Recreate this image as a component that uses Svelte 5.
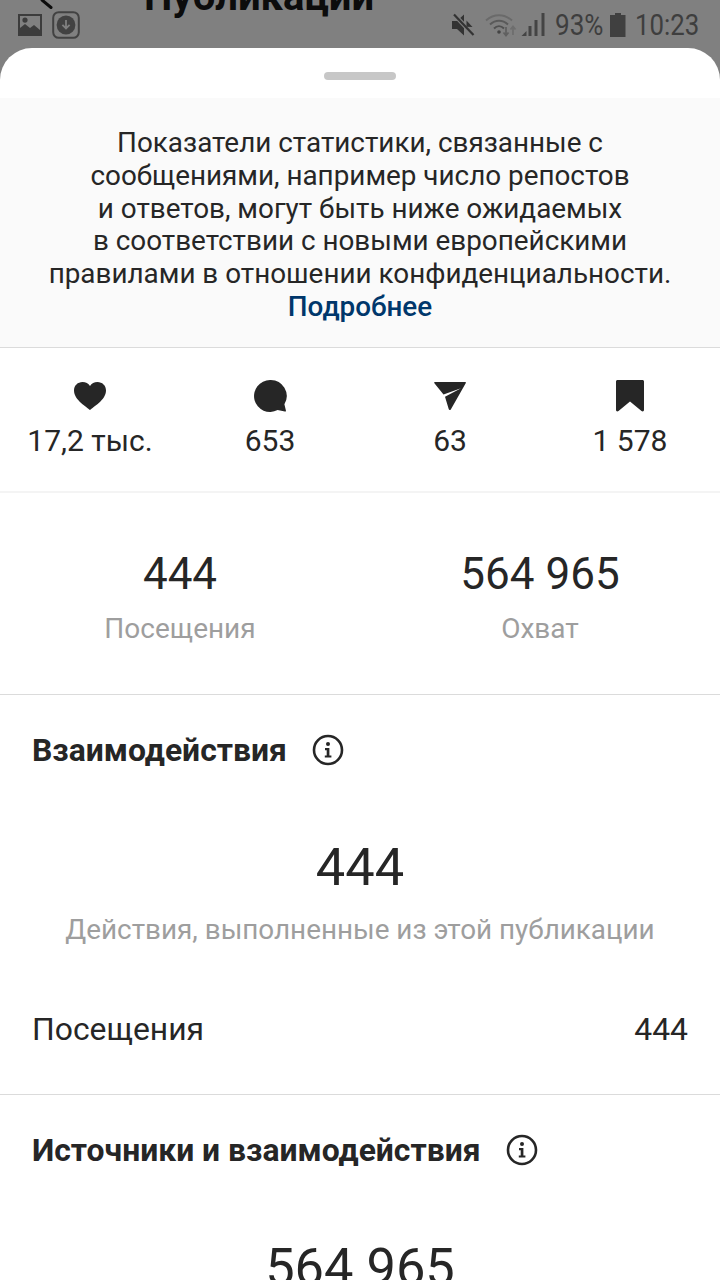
<script>
	const notice = [
		'Показатели статистики, связанные с',
		'сообщениями, например число репостов',
		'и ответов, могут быть ниже ожидаемых',
		'в соответствии с новыми европейскими',
		'правилами в отношении конфиденциальности.'
	];
	const counts = [
		{ icon: 'heart', value: '17,2 тыс.' },
		{ icon: 'comment', value: '653' },
		{ icon: 'send', value: '63' },
		{ icon: 'save', value: '1 578' }
	];
</script>

{#snippet info()}
	<svg class="info" viewBox="0 0 32 32" aria-hidden="true">
		<circle cx="16" cy="16" r="14" fill="none" stroke="#262626" stroke-width="2.6" />
		<circle cx="16" cy="10" r="2" fill="#262626" />
		<path d="M13 14h4.400v7.400h2v2.200h-6.600v-2.200h1.900v-5.200H13z" fill="#262626" />
	</svg>
{/snippet}

<div class="screen">
	<div class="statusbar">
		<div class="title">Публикации</div>
		<svg class="back" viewBox="0 0 24 12" aria-hidden="true">
			<path d="M2 0L11 7.500" fill="none" stroke="#0c0c0c" stroke-width="3" stroke-linecap="round" />
		</svg>
		<div class="left-icons">
			<svg class="pic" viewBox="0 0 24 22" aria-hidden="true">
				<path fill-rule="evenodd" d="M0 0h24v22H0zM2 2v12l5-4 5 4 4-3 6 5V2zM7 3.500a2.600 2.600 0 1 1 0 5.200 2.600 2.600 0 0 1 0-5.200z" fill="#3c3c3c" />
			</svg>
			<svg class="dl" viewBox="0 0 28 28" aria-hidden="true">
				<rect x="1.200" y="1.200" width="25.600" height="25.600" rx="5.500" fill="none" stroke="#424242" stroke-width="2" />
				<circle cx="14" cy="14" r="9.400" fill="#424242" />
				<path d="M14 9v8.400M10.400 13.800L14 17.400l3.600-3.600" fill="none" stroke="#808080" stroke-width="1.800" />
			</svg>
		</div>
		<div class="right-icons">
			<svg class="mute" viewBox="0 0 24 24" aria-hidden="true">
				<path d="M1 8h5l7-6.500v21L6 16H1z" fill="#333" />
				<path d="M3 1.500L23 22.500" stroke="#808080" stroke-width="4.400" />
				<path d="M3 1.500L22.500 22" stroke="#333" stroke-width="2.200" />
				<path d="M15.500 7.600l6 6.400-6-.2z" fill="#333" />
			</svg>
			<svg class="wifi" viewBox="0 0 32 24" aria-hidden="true">
				<path d="M1 7.500C9 0.500 19 0.500 27 7.500" fill="none" stroke="#6a6a6a" stroke-width="2" />
				<path d="M5 11.500C10.500 6.500 17.500 6.500 23 11.500" fill="none" stroke="#5a5a5a" stroke-width="2" />
				<path d="M9 15.500C12 12.500 16 12.500 19 15.500" fill="none" stroke="#505050" stroke-width="2" />
				<circle cx="14" cy="19" r="1.800" fill="#444" />
				<path d="M21 14v8M18.500 19.500l2.500 3 2.500-3" fill="none" stroke="#606060" stroke-width="1.800" />
				<path d="M28 22v-8M25.500 16.500l2.500-3 2.500 3" fill="none" stroke="#6e6e6e" stroke-width="1.800" />
			</svg>
			<svg class="signal" viewBox="0 0 24 24" aria-hidden="true">
				<path d="M0 23l5-5v5z" fill="#444" />
				<rect x="7" y="13" width="3" height="10" fill="#444" />
				<rect x="13" y="7" width="3" height="16" fill="#444" />
				<rect x="20" y="0" width="3" height="23" fill="#444" />
			</svg>
			<span class="pct">93%</span>
			<svg class="battery" viewBox="0 0 16 24" aria-hidden="true">
				<path d="M5 0h6v2h4.500v22H0V2h5z" fill="#404040" />
			</svg>
			<span class="clock">10:23</span>
		</div>
	</div>

	<div class="sheet">
		<div class="handle-row"><div class="handle"></div></div>

		<section class="notice">
			{#each notice as line}
				<div>{line}</div>
			{/each}
			<div class="more">Подробнее</div>
		</section>

		<section class="counts">
			{#each counts as c}
				<div class="count">
					<svg class="count-icon" viewBox="0 0 36 36" aria-hidden="true">
						{#if c.icon === 'heart'}
							<path d="M18 32C15 29 2 22 2 12.500 2 7.500 5.800 4 10.500 4c3.200 0 6 1.500 7.500 4 1.500-2.500 4.300-4 7.500-4C30.200 4 34 7.500 34 12.500 34 22 21 29 18 32z" fill="#262626" />
						{:else if c.icon === 'comment'}
							<path d="M18 2a16 16 0 1 0 7.600 30.100l7.300 1.500c.8.100 1.200-.4 1-1l-1.500-6.400A16 16 0 0 0 18 2z" fill="#262626" />
						{:else if c.icon === 'send'}
							<path d="M3 4h30c.8 0 1.100.6.700 1.200L18.800 31.400c-.6 1-1.900.8-2.100-.3L13 18.800 29 10.200 11.500 16.400 2.400 5.300C1.900 4.700 2.300 4 3 4z" fill="#262626" />
						{:else}
							<path d="M4 3.500C4 2.700 4.700 2 5.500 2h25c.8 0 1.500.7 1.500 1.500V32c0 1.400-1.500 1.800-2.500.9L18 23.500 6.500 32.900C5.500 33.800 4 33.400 4 32z" fill="#262626" />
						{/if}
					</svg>
					<div class="count-value">{c.value}</div>
				</div>
			{/each}
		</section>

		<section class="overview">
			<div class="stat">
				<div class="stat-num">444</div>
				<div class="stat-label">Посещения</div>
			</div>
			<div class="stat">
				<div class="stat-num">564 965</div>
				<div class="stat-label">Охват</div>
			</div>
		</section>

		<section class="block interactions">
			<div class="heading">
				<span>Взаимодействия</span>
				{@render info()}
			</div>
			<div class="big">444</div>
			<div class="big-label">Действия, выполненные из этой публикации</div>
			<div class="row">
				<span>Посещения</span>
				<span>444</span>
			</div>
		</section>

		<section class="block">
			<div class="heading">
				<span>Источники и взаимодействия</span>
				{@render info()}
			</div>
			<div class="big">564 965</div>
		</section>
	</div>
</div>

<style>
	:global(body) {
		margin: 0;
		background: #808080;
	}

	.screen {
		width: 720px;
		height: 1280px;
		overflow: hidden;
		position: relative;
		font-family: Roboto, sans-serif;
		color: #262626;
		background: #808080;
	}

	.statusbar {
		height: 48px;
		position: relative;
		display: flex;
		justify-content: space-between;
		align-items: center;
	}

	.title {
		position: absolute;
		left: 144px;
		top: -25px;
		font-size: 40px;
		line-height: 44px;
		font-weight: 700;
		color: #0c0c0c;
	}

	.back {
		position: absolute;
		left: 40px;
		top: 0;
		width: 24px;
		height: 12px;
	}

	.left-icons {
		display: flex;
		align-items: center;
		gap: 10px;
		margin: 2px 0 0 18px;
	}

	.pic {
		width: 24px;
		height: 22px;
	}

	.dl {
		width: 28px;
		height: 28px;
	}

	.right-icons {
		display: flex;
		align-items: center;
		margin: 1px 22px 0 0;
		color: #3e3e3e;
		font-size: 29px;
	}

	.mute {
		width: 24px;
		height: 24px;
		margin-right: 10px;
	}

	.wifi {
		width: 32px;
		height: 24px;
		margin-right: 4px;
	}

	.signal {
		width: 25px;
		height: 24px;
		margin-right: 9px;
	}

	.pct {
		display: inline-block;
		width: 47px;
		transform: scaleX(0.9);
		transform-origin: left;
	}

	.battery {
		width: 16px;
		height: 24px;
		margin: 0 9px 0 8px;
	}

	.clock {
		display: inline-block;
		width: 63px;
		transform: scaleX(0.89);
		transform-origin: left;
	}

	.sheet {
		background: #fff;
		border-radius: 32px 32px 0 0;
	}

	.handle-row {
		height: 50px;
		display: flex;
		justify-content: center;
		padding-top: 24px;
		box-sizing: border-box;
	}

	.handle {
		width: 72px;
		height: 8px;
		border-radius: 4px;
		background: #c7c7c7;
	}

	.notice {
		height: 250px;
		box-sizing: border-box;
		padding-top: 29px;
		background: #fafafa;
		border-bottom: 1px solid #dbdbdb;
		text-align: center;
		font-size: 27.85px;
		line-height: 32.8px;
	}

	.more {
		font-weight: 500;
		color: #00376b;
	}

	.counts {
		height: 145px;
		box-sizing: border-box;
		padding-top: 30px;
		display: grid;
		grid-template-columns: repeat(4, 180px);
		border-bottom: 2px solid #f4f4f4;
	}

	.count {
		display: flex;
		flex-direction: column;
		align-items: center;
	}

	.count-icon {
		width: 36px;
		height: 36px;
	}

	.count-value {
		margin-top: 10px;
		font-size: 30px;
		line-height: 34px;
	}

	.overview {
		height: 202px;
		box-sizing: border-box;
		padding-top: 56px;
		display: grid;
		grid-template-columns: 360px 360px;
		border-bottom: 1px solid #dbdbdb;
		text-align: center;
	}

	.stat-num {
		font-size: 44px;
		line-height: 50px;
	}

	.stat-label {
		margin-top: 14px;
		font-size: 28px;
		line-height: 32px;
		color: #9e9e9e;
	}

	.block {
		padding: 35px 32px 0;
	}

	.interactions {
		height: 400px;
		box-sizing: border-box;
		border-bottom: 1px solid #dbdbdb;
	}

	.heading {
		display: flex;
		align-items: center;
		gap: 25px;
		height: 40px;
		font-size: 31.85px;
		font-weight: 700;
	}

	.info {
		width: 32px;
		height: 32px;
	}

	.big {
		margin-top: 67px;
		font-size: 52.4px;
		line-height: 60px;
		text-align: center;
	}

	.big-label {
		margin-top: 17px;
		font-size: 27.85px;
		line-height: 32px;
		text-align: center;
		color: #9e9e9e;
	}

	.row {
		display: flex;
		justify-content: space-between;
		margin-top: 65px;
		font-size: 31.85px;
		line-height: 36px;
	}
</style>
